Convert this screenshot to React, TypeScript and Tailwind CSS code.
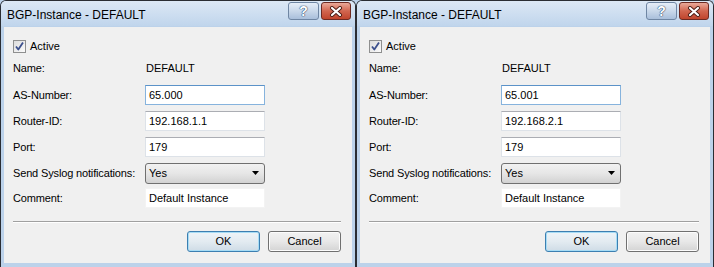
import React from 'react';

type Data = { as: string; router: string };

const font = { fontFamily: '"Liberation Sans", Arial, sans-serif' };

function Check() {
  return (
    <span className="flex h-[13px] w-[13px] items-center justify-center border border-[#8e8f8f] bg-gradient-to-br from-[#dcdcdc] to-[#fbfbfb]">
      <svg width="11" height="11" viewBox="0 0 11 11">
        <path d="M2 5.5 L4.3 8.5 L9 1.5" fill="none" stroke="#3b4f8c" strokeWidth="1.8" strokeLinejoin="round" />
      </svg>
    </span>
  );
}

function Input({ value, focused }: { value: string; focused?: boolean }) {
  return (
    <div
      className={
        'flex h-[20px] w-[120px] items-center bg-white pl-[3px] text-[11px] text-black border ' +
        (focused
          ? 'border-[#86b3dd] border-t-[#5b92c8]'
          : 'border-[#dde2e8] border-t-[#abadb3]')
      }
    >
      {value}
    </div>
  );
}

function Row({ label, children, className }: { label: string; children: React.ReactNode; className?: string }) {
  return (
    <div className={'flex h-[20px] items-center ' + (className || '')}>
      <span className="w-[132px] text-[11px] tracking-[-0.15px] text-black">{label}</span>
      {children}
    </div>
  );
}

function Window({ data, className }: { data: Data; className?: string }) {
  return (
    <div
      className={
        'flex h-[267px] flex-col rounded-t-[6px] border border-b-0 border-[#2a2d33] bg-[#bcd2ea] px-[3px] ' +
        (className || '')
      }
      style={font}
    >
      {/* Title bar */}
      <div className="-mx-[3px] flex h-[25px] items-start justify-between rounded-t-[5px] bg-gradient-to-b from-[#dce8f5] to-[#c0d5ec] pl-[6px] pr-[4px]">
        <span className="mt-[5px] text-[12px] text-black">BGP-Instance - DEFAULT</span>
        <div className="mt-[1px] flex gap-[2px]">
          <div className="flex h-[18px] w-[31px] items-center justify-center rounded-[3px] border border-[#6f86a3] bg-gradient-to-b from-[#e6eef8] via-[#c9d8ea] to-[#a9bfdb]">
            <span className="text-[14px] font-bold leading-none text-white [text-shadow:0_0_1px_#324c6e,0_0_1px_#324c6e,0_0_1px_#324c6e]">?</span>
          </div>
          <div className="flex h-[18px] w-[30px] items-center justify-center rounded-[3px] border border-[#6d2a22] bg-gradient-to-b from-[#e9a999] via-[#d1654f] to-[#c0442c]">
            <svg width="14" height="11" viewBox="0 0 14 11">
              <path d="M3 2 L11 9 M11 2 L3 9" stroke="#4a1c14" strokeWidth="4" strokeLinecap="round" />
              <path d="M3 2 L11 9 M11 2 L3 9" stroke="#ffffff" strokeWidth="2.2" strokeLinecap="round" />
            </svg>
          </div>
        </div>
      </div>

      {/* Client area */}
      <div className="mt-[1px] mb-[4px] flex flex-1 flex-col bg-[#f0f0f0] pl-[9px] pr-[8px] pt-[9px]">
        <div className="flex h-[20px] items-center gap-[4px]">
          <Check />
          <span className="text-[11px] text-black">Active</span>
        </div>
        <Row label="Name:" className="mt-[2px]">
          <span className="pl-[1px] text-[11px] text-black">DEFAULT</span>
        </Row>
        <Row label="AS-Number:" className="mt-[7px]">
          <Input value={data.as} focused />
        </Row>
        <Row label="Router-ID:" className="mt-[6px]">
          <Input value={data.router} />
        </Row>
        <Row label="Port:" className="mt-[6px]">
          <Input value="179" />
        </Row>
        <Row label="Send Syslog notifications:" className="mt-[6px]">
          <div className="flex h-[21px] w-[120px] items-center justify-between rounded-[3px] border border-[#707070] bg-gradient-to-b from-[#f2f2f2] via-[#e6e6e6] to-[#d2d2d2] pl-[3px] pr-[5px] text-[11px] text-black">
            <span>Yes</span>
            <svg width="7" height="4" viewBox="0 0 7 4">
              <path d="M0 0 H7 L3.5 4 Z" fill="#000" />
            </svg>
          </div>
        </Row>
        <Row label="Comment:" className="mt-[5px]">
          <div className="flex h-[20px] w-[120px] items-center border border-[#f3f3f3] bg-white pl-[3px] text-[11px] text-black">
            Default Instance
          </div>
        </Row>
        <div className="mt-[13px] mr-[3px] border-t border-b border-t-[#a0a0a0] border-b-white" />
        <div className="mt-[8px] flex justify-end gap-[8px] pr-[3px]">
          <div className="flex h-[21px] w-[73px] items-center justify-center rounded-[3px] border border-[#3c7fb1] bg-gradient-to-b from-[#eef4f8] via-[#e3ebf1] to-[#cfdce6] text-[11px] text-black shadow-[inset_0_0_0_1px_#a7dcf5]">
            OK
          </div>
          <div className="flex h-[21px] w-[73px] items-center justify-center rounded-[3px] border border-[#707070] bg-gradient-to-b from-[#f2f2f2] via-[#e8e8e8] to-[#d4d4d4] text-[11px] text-black shadow-[inset_0_0_0_1px_#fcfcfc]">
            Cancel
          </div>
        </div>
      </div>
    </div>
  );
}

export default function App() {
  return (
    <div className="flex h-[267px] w-[714px] overflow-hidden bg-[#bcd2ea]">
      <Window data={{ as: '65.000', router: '192.168.1.1' }} className="w-[356px]" />
      <Window data={{ as: '65.001', router: '192.168.2.1' }} className="w-[358px]" />
    </div>
  );
}
